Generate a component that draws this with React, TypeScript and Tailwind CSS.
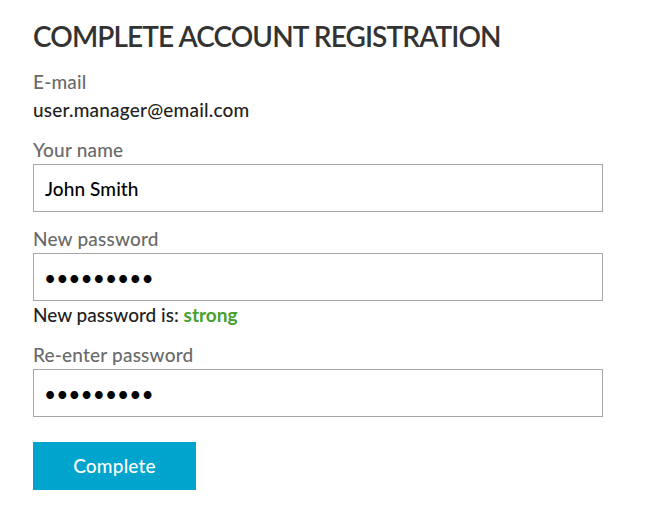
import React from 'react';

const font = { fontFamily: 'Lato, "Open Sans", sans-serif' };

function Field({ label, type = 'text', value }: { label: string; type?: string; value: string }) {
  return (
    <div className="mt-3">
      <label className="block text-[19px] leading-[28px] tracking-[0.2px] font-medium text-[#6a6a6a]">{label}</label>
      <input
        type={type}
        readOnly
        value={value}
        className={`block w-[570px] h-12 border border-[#a6a6a6] bg-white text-black outline-none ${
          type === 'password' ? 'px-[10px] text-[21px]' : 'px-[11px] text-[19px] font-medium tracking-[0.1px]'
        }`}
      />
    </div>
  );
}

export default function App() {
  return (
    <div className="min-h-screen bg-white pl-[33px] pt-[18px]" style={font}>
      <h1 className="text-[28px] leading-[36px] font-semibold text-[#333] tracking-[-0.9px]">COMPLETE ACCOUNT REGISTRATION</h1>

      <div className="mt-[14px] text-[19px] leading-[28px] tracking-[0.2px] font-medium">
        <div className="text-[#6a6a6a]">E-mail</div>
        <div className="text-[#222]">user.manager@email.com</div>
      </div>

      <Field label="Your name" value="John Smith" />

      <div className="mt-[13px]">
        <label className="block text-[19px] leading-[28px] tracking-[0.2px] font-medium text-[#6a6a6a]">New password</label>
        <input
          type="password"
          readOnly
          value="123456789"
          className="block w-[570px] h-12 border border-[#a6a6a6] bg-white px-[10px] text-[21px] text-black outline-none"
        />
        <div className="text-[19px] leading-[28px] font-medium text-[#222]">
          New password is: <span className="font-bold text-[#46a12e]">strong</span>
        </div>
      </div>

      <Field label="Re-enter password" type="password" value="123456789" />

      <button className="mt-[25px] w-[163px] h-12 bg-[#00a4cd] text-white text-[19px] font-medium tracking-[0.2px]">Complete</button>
    </div>
  );
}
